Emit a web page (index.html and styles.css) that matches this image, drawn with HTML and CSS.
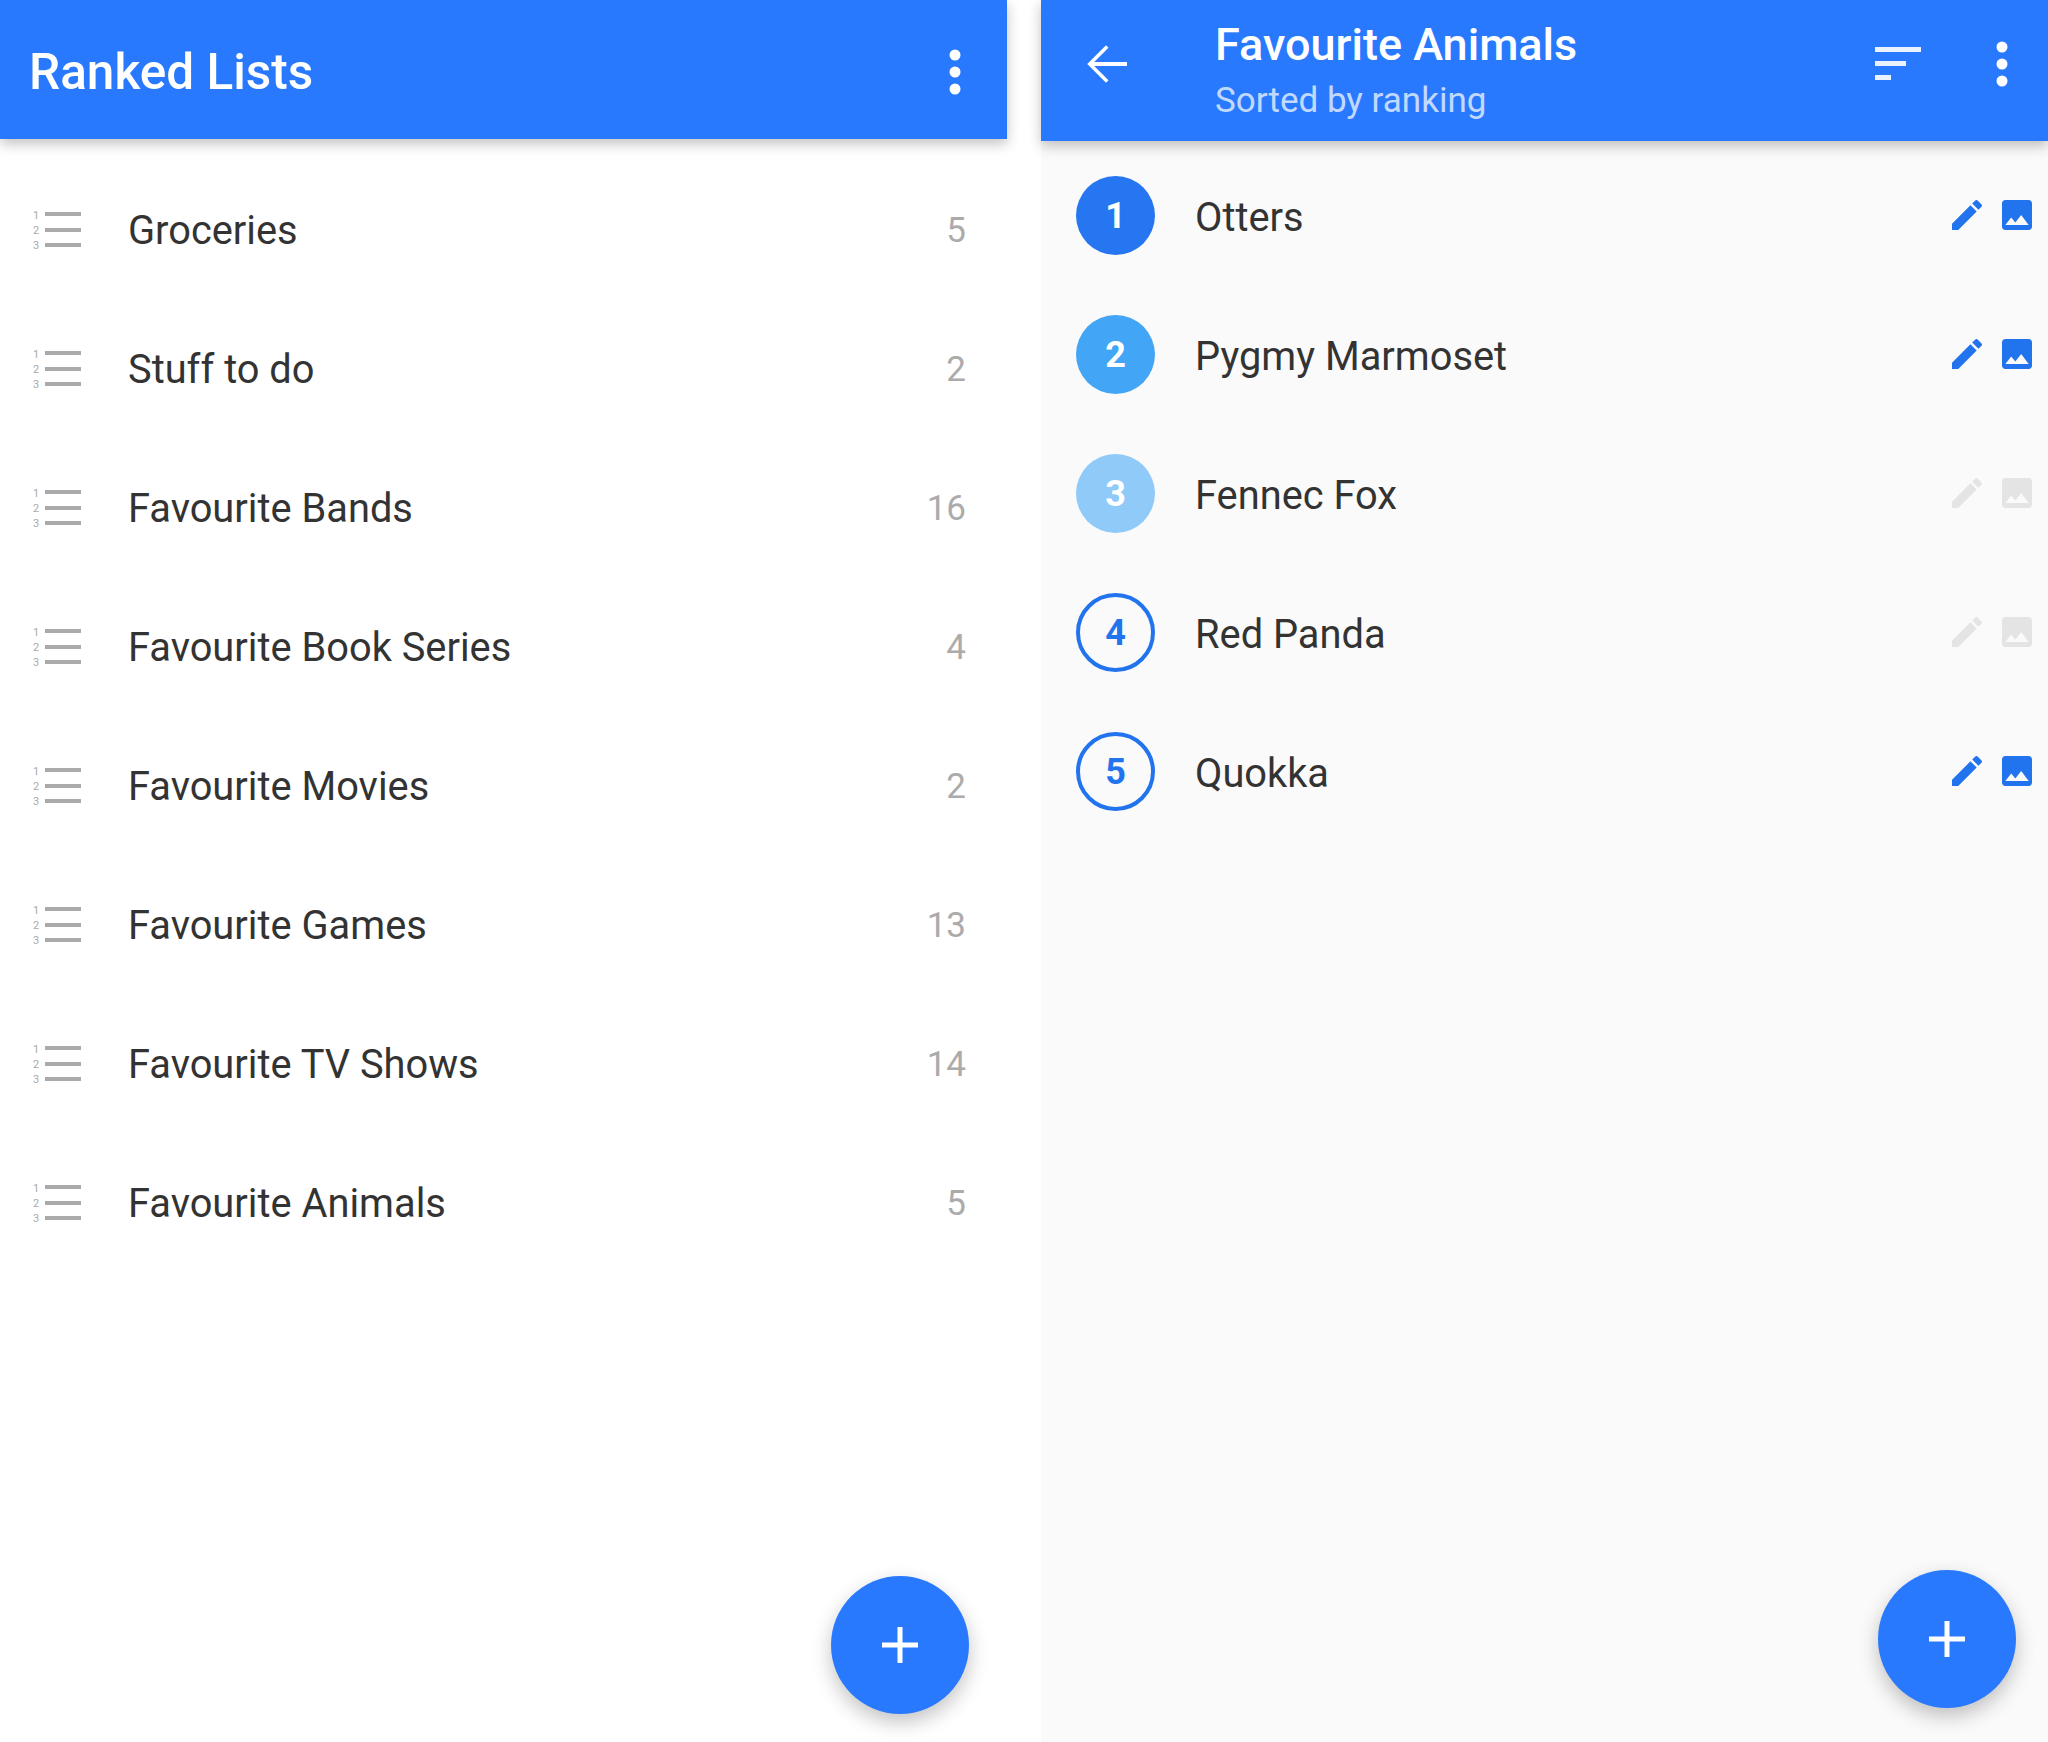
FILE: index.html
```html
<!DOCTYPE html>
<html lang="en">
<head>
    <meta charset="UTF-8">
    <title>Ranked Lists</title>
    <link rel="stylesheet" href="styles.css">
</head>
<body>

<svg class="icon-defs" aria-hidden="true">
    <symbol id="list-icon" viewBox="0 0 50 44">
        <text x="1" y="10" class="list-digit">1</text>
        <text x="1" y="25" class="list-digit">2</text>
        <text x="1" y="40" class="list-digit">3</text>
        <rect x="13" y="3" width="36" height="4"></rect>
        <rect x="13" y="19" width="36" height="4"></rect>
        <rect x="13" y="34" width="36" height="4"></rect>
    </symbol>
    <symbol id="dots-icon" viewBox="0 0 12 46">
        <circle cx="6" cy="6" r="5.5"></circle>
        <circle cx="6" cy="23" r="5.5"></circle>
        <circle cx="6" cy="40" r="5.5"></circle>
    </symbol>
    <symbol id="plus-icon" viewBox="0 0 36 36">
        <rect x="0" y="15.5" width="36" height="5"></rect>
        <rect x="15.5" y="0" width="5" height="36"></rect>
    </symbol>
    <symbol id="pencil-icon" viewBox="3 3 18 18">
        <path d="M3 17.25V21h3.75L17.81 9.94l-3.75-3.75L3 17.25zM20.71 7.04c.39-.39.39-1.02 0-1.41l-2.34-2.34c-.39-.39-1.02-.39-1.41 0l-1.83 1.83 3.75 3.75 1.83-1.83z"></path>
    </symbol>
    <symbol id="image-icon" viewBox="3 3 18 18">
        <path d="M21 19V5c0-1.1-.9-2-2-2H5c-1.100 0-2 .9-2 2v14c0 1.100.9 2 2 2h14c1.100 0 2-.9 2-2zM8.500 13.500l2.500 3.010L14.500 12l4.500 6H5l3.500-4.500z"></path>
    </symbol>
</svg>

<div class="screens">
    <div class="screen">
        <div class="app-bar">
            <div class="app-title">Ranked Lists</div>
            <svg class="dots"><use href="#dots-icon"></use></svg>
        </div>
        <div class="lists">
            <div class="list-row">
                <svg class="list-icon"><use href="#list-icon"></use></svg>
                <span class="row-name">Groceries</span>
                <span class="row-count">5</span>
            </div>
            <div class="list-row">
                <svg class="list-icon"><use href="#list-icon"></use></svg>
                <span class="row-name">Stuff to do</span>
                <span class="row-count">2</span>
            </div>
            <div class="list-row">
                <svg class="list-icon"><use href="#list-icon"></use></svg>
                <span class="row-name">Favourite Bands</span>
                <span class="row-count">16</span>
            </div>
            <div class="list-row">
                <svg class="list-icon"><use href="#list-icon"></use></svg>
                <span class="row-name">Favourite Book Series</span>
                <span class="row-count">4</span>
            </div>
            <div class="list-row">
                <svg class="list-icon"><use href="#list-icon"></use></svg>
                <span class="row-name">Favourite Movies</span>
                <span class="row-count">2</span>
            </div>
            <div class="list-row">
                <svg class="list-icon"><use href="#list-icon"></use></svg>
                <span class="row-name">Favourite Games</span>
                <span class="row-count">13</span>
            </div>
            <div class="list-row">
                <svg class="list-icon"><use href="#list-icon"></use></svg>
                <span class="row-name">Favourite TV Shows</span>
                <span class="row-count">14</span>
            </div>
            <div class="list-row">
                <svg class="list-icon"><use href="#list-icon"></use></svg>
                <span class="row-name">Favourite Animals</span>
                <span class="row-count">5</span>
            </div>
        </div>
        <div class="fab fab-left"><svg class="plus"><use href="#plus-icon"></use></svg></div>
    </div>

    <div class="screen screen-grey">
        <div class="app-bar app-bar-detail">
            <svg class="back" viewBox="4 4 16 16"><path d="M20 11.200H6.900l5.700-5.700L11.600 4.500 4.100 12l7.500 7.500 1-1-5.700-5.700H20z"></path></svg>
            <div class="detail-titles">
                <div class="detail-title">Favourite Animals</div>
                <div class="detail-sub">Sorted by ranking</div>
            </div>
            <svg class="sort" viewBox="0 0 46 34">
                <rect x="0" y="0" width="46" height="5"></rect>
                <rect x="0" y="14" width="31" height="5"></rect>
                <rect x="0" y="28" width="16" height="5"></rect>
            </svg>
            <svg class="dots"><use href="#dots-icon"></use></svg>
        </div>
        <div class="animals">
            <div class="animal-row">
                <span class="rank rank-1">1</span>
                <span class="row-name">Otters</span>
                <svg class="action"><use href="#pencil-icon"></use></svg>
                <svg class="action"><use href="#image-icon"></use></svg>
            </div>
            <div class="animal-row">
                <span class="rank rank-2">2</span>
                <span class="row-name">Pygmy Marmoset</span>
                <svg class="action"><use href="#pencil-icon"></use></svg>
                <svg class="action"><use href="#image-icon"></use></svg>
            </div>
            <div class="animal-row">
                <span class="rank rank-3">3</span>
                <span class="row-name">Fennec Fox</span>
                <svg class="action action-off"><use href="#pencil-icon"></use></svg>
                <svg class="action action-off"><use href="#image-icon"></use></svg>
            </div>
            <div class="animal-row">
                <span class="rank rank-outline">4</span>
                <span class="row-name">Red Panda</span>
                <svg class="action action-off"><use href="#pencil-icon"></use></svg>
                <svg class="action action-off"><use href="#image-icon"></use></svg>
            </div>
            <div class="animal-row">
                <span class="rank rank-outline">5</span>
                <span class="row-name">Quokka</span>
                <svg class="action"><use href="#pencil-icon"></use></svg>
                <svg class="action"><use href="#image-icon"></use></svg>
            </div>
        </div>
        <div class="fab fab-right"><svg class="plus"><use href="#plus-icon"></use></svg></div>
    </div>
</div>

</body>
</html>
```

FILE: styles.css
```css
body {
    margin: 0;
    padding: 0;
    background-color: #ffffff;
    font-family: Roboto, 'Liberation Sans', sans-serif;
    color: #333333;
}

.icon-defs {
    display: none;
}

.screens {
    display: flex;
    justify-content: space-between;
    height: 1742px;
    overflow: hidden;
}

.screen {
    position: relative;
    width: 1007px;
    height: 100%;
    background-color: #ffffff;
}

.screen-grey {
    background-color: #fafafa;
}

.app-bar {
    position: relative;
    display: flex;
    align-items: center;
    justify-content: space-between;
    box-sizing: border-box;
    height: 139px;
    padding: 4px 46px 0 29px;
    background-color: #2979ff;
    color: #ffffff;
    box-shadow: 0 5px 12px rgba(0, 0, 0, 0.24);
}

.app-title {
    font-size: 49.5px;
    font-weight: 500;
}

.dots {
    width: 12px;
    height: 46px;
    fill: #ffffff;
    flex-shrink: 0;
}

.app-bar-detail {
    justify-content: flex-start;
    height: 141px;
    padding: 0 40px 14px 45px;
}

.back {
    width: 42px;
    height: 40px;
    fill: #ffffff;
    flex-shrink: 0;
}

.detail-titles {
    flex: 1;
    margin: 19px 0 0 87px;
}

.detail-title {
    font-size: 45px;
    font-weight: 500;
    line-height: 56px;
}

.detail-sub {
    font-size: 35px;
    line-height: 56px;
    color: #c2d9ff;
}

.sort {
    width: 46px;
    height: 34px;
    margin-right: 75px;
    fill: #ffffff;
    opacity: 0.9;
    flex-shrink: 0;
}

.lists {
    padding-top: 22px;
}

.list-row {
    display: flex;
    align-items: center;
    height: 139px;
    padding: 0 41px 0 32px;
}

.list-icon {
    width: 50px;
    height: 44px;
    margin-right: 46px;
    fill: #aaaaaa;
    flex-shrink: 0;
}

.list-digit {
    font-family: Roboto, sans-serif;
    font-size: 11px;
}

.row-name {
    flex: 1;
    font-size: 39.8px;
}

.row-count {
    font-size: 35px;
    color: #ababab;
}

.animals {
    padding-top: 5px;
}

.animal-row {
    display: flex;
    align-items: center;
    height: 139px;
    padding: 0 16px 0 35px;
}

.animal-row .row-name {
    padding-top: 3px;
}

.rank {
    display: flex;
    align-items: center;
    justify-content: center;
    box-sizing: border-box;
    width: 79px;
    height: 79px;
    margin-right: 40px;
    border-radius: 50%;
    color: #ffffff;
    font-size: 36px;
    font-weight: 700;
    flex-shrink: 0;
}

.rank-1 {
    background-color: #2676f2;
}

.rank-2 {
    background-color: #42a5f5;
}

.rank-3 {
    background-color: #90caf9;
}

.rank-outline {
    border: 4px solid #2273ee;
    color: #2273ee;
}

.action {
    width: 30px;
    height: 30px;
    margin: 0 0 2px 20px;
    fill: #2273ee;
    flex-shrink: 0;
}

.action-off {
    fill: #e4e4e4;
}

.fab {
    position: absolute;
    display: flex;
    align-items: center;
    justify-content: center;
    width: 138px;
    height: 138px;
    border-radius: 50%;
    background-color: #2979ff;
    box-shadow: 0 8px 20px rgba(0, 0, 0, 0.24);
}

.fab-left {
    top: 1576px;
    left: 831px;
}

.fab-right {
    top: 1570px;
    left: 837px;
}

.plus {
    width: 36px;
    height: 36px;
    fill: #ffffff;
}
```
